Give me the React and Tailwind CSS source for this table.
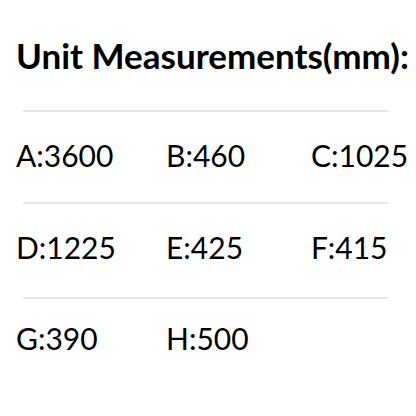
export default function App() {
  const rows = [
    { items: ["A:3600", "B:460", "C:1025"], pad: "pt-[23px] pb-[27px]" },
    { items: ["D:1225", "E:425", "F:415"], pad: "pt-[23px] pb-[30px]" },
    { items: ["G:390", "H:500", ""], pad: "pt-[19px] pb-[20px]" },
  ];
  return (
    <div className="w-[416px] h-[416px] bg-white text-black overflow-hidden" style={{ fontFamily: 'Lato, sans-serif' }}>
      <h1 className="pl-[16px] pt-[34px] text-[35px] leading-[42px] font-bold whitespace-nowrap">
        Unit Measurements(mm):
      </h1>
      <div className="mt-[34px]">
        {rows.map((r, i) => (
          <div key={i}>
            <div className="mx-[23px] w-[365px] h-[2px] bg-[#e6e6e6]" />
            <div className={`grid grid-cols-[150px_145px_1fr] pl-[16px] text-[30px] leading-[40px] whitespace-nowrap ${r.pad}`}>
              {r.items.map((c, j) => (
                <span key={j}>{c}</span>
              ))}
            </div>
          </div>
        ))}
      </div>
    </div>
  );
}
